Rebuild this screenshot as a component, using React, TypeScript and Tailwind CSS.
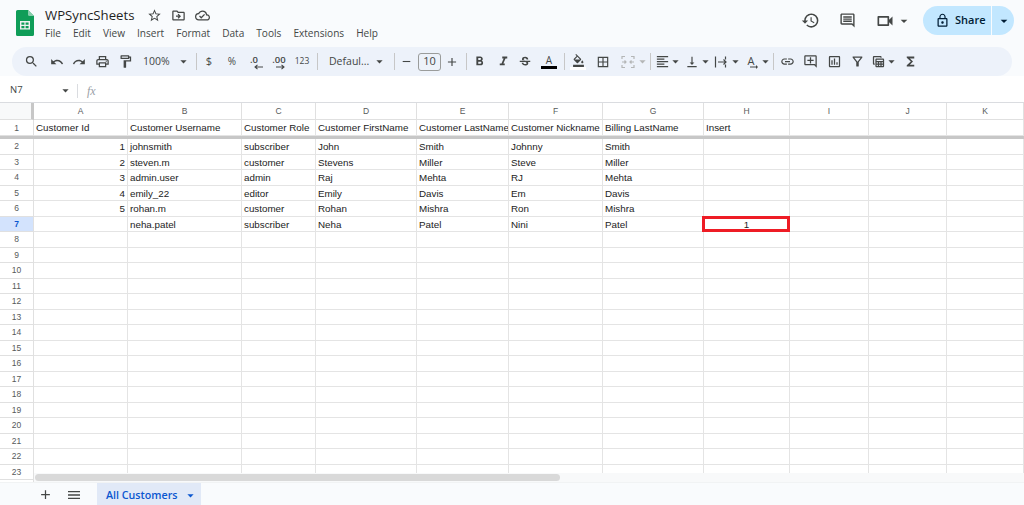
import React from "react";
import {
  MdStarBorder,
  MdOutlineDriveFileMove,
  MdOutlineCloudDone,
  MdHistory,
  MdOutlineComment,
  MdOutlineVideocam,
  MdLockOutline,
  MdArrowDropDown,
  MdSearch,
  MdUndo,
  MdRedo,
  MdOutlinePrint,
  MdOutlineFormatPaint,
  MdRemove,
  MdAdd,
  MdFormatBold,
  MdFormatItalic,
  MdStrikethroughS,
  MdFormatColorFill,
  MdBorderAll,
  MdFormatAlignLeft,
  MdVerticalAlignBottom,
  MdLink,
  MdOutlineAddComment,
  MdOutlineAssessment,
  MdOutlineFilterAlt,
  MdOutlineTableView,
  MdFunctions,
  MdMenu,
  MdArrowRightAlt,
} from "react-icons/md";

const menus = ["File", "Edit", "View", "Insert", "Format", "Data", "Tools", "Extensions", "Help"];

const columns = ["A", "B", "C", "D", "E", "F", "G", "H", "I", "J", "K"];

const titles = [
  "Customer Id",
  "Customer Username",
  "Customer Role",
  "Customer FirstName",
  "Customer LastName",
  "Customer Nickname",
  "Billing LastName",
  "Insert",
];

const customers = [
  ["1", "johnsmith", "subscriber", "John", "Smith", "Johnny", "Smith"],
  ["2", "steven.m", "customer", "Stevens", "Miller", "Steve", "Miller"],
  ["3", "admin.user", "admin", "Raj", "Mehta", "RJ", "Mehta"],
  ["4", "emily_22", "editor", "Emily", "Davis", "Em", "Davis"],
  ["5", "rohan.m", "customer", "Rohan", "Mishra", "Ron", "Mishra"],
  ["", "neha.patel", "subscriber", "Neha", "Patel", "Nini", "Patel"],
];

const Tool = ({ className, children }: { className: string; children: React.ReactNode }) => (
  <span className={"flex h-4 w-4 shrink-0 items-center justify-center text-[#444746] " + className}>
    {children}
  </span>
);

const Arrow = ({ className }: { className: string }) => (
  <span className={"flex h-4 w-2 shrink-0 items-center justify-center text-[#444746] " + className}>
    <MdArrowDropDown size={15} className="shrink-0" />
  </span>
);

const Divider = ({ className }: { className: string }) => (
  <span className={"h-[17px] w-px shrink-0 bg-[#c7c7c7] " + className} />
);

const SheetsLogo = () => (
  <svg width="18" height="26" viewBox="0 0 18 26">
    <path d="M1.6 0H12l6 6v18.4a1.6 1.6 0 0 1-1.6 1.6H1.6A1.6 1.6 0 0 1 0 24.4V1.6A1.6 1.6 0 0 1 1.6 0z" fill="#0f9d58" />
    <path d="M12 0l6 6h-4.4A1.6 1.6 0 0 1 12 4.4z" fill="#87ceac" />
    <path d="M4 11h10v8.5H4zm1.4 1.4v2.3h3v-2.3zm4.2 0v2.3h3v-2.3zm-4.2 3.5v2.3h3v-2.3zm4.2 0v2.3h3v-2.3z" fill="#f1f1f1" fillRule="evenodd" />
  </svg>
);

const MergeIcon = () => (
  <svg width="14" height="14" viewBox="0 0 14 14" fill="none" stroke="#b4b6b6" strokeWidth="1.2">
    <path d="M1 4V1.5h3M10 1.5h3V4M1 10v2.5h3M10 12.5h3V10" />
    <path d="M1 7h3.5M3.5 5.5L5 7 3.5 8.5M13 7H9.5M10.5 5.5L9 7l1.5 1.5" />
  </svg>
);

const WrapIcon = () => (
  <svg width="14" height="14" viewBox="0 0 14 14" fill="none" stroke="#444746" strokeWidth="1.2">
    <path d="M1.5 1.5v11M11.5 1.5v3M11.5 9.5v3M4 7h8M9.5 4.5L12 7 9.5 9.5" />
  </svg>
);

const Decimal = ({ label, right }: { label: string; right?: boolean }) => (
  <span className="relative -mt-[4px] text-[9.5px] font-semibold leading-none">
    {label}
    <svg width="9" height="6" viewBox="0 0 9 6" fill="none" stroke="#444746" strokeWidth="1.1" className="absolute left-[4px] top-[9px]">
      {right ? <path d="M0 3h8M5.5 .8L8 3 5.5 5.2" /> : <path d="M1 3h8M3.5 .8L1 3l2.5 2.2" />}
    </svg>
  </span>
);

const Header = () => (
  <div className="flex h-[47px] shrink-0 items-start">
    <div className="ml-[16px] mt-[10px]">
      <SheetsLogo />
    </div>
    <div className="ml-[11px] flex flex-col">
      <div className="mt-[6px] flex h-[19px] items-center">
        <span className="font-['Open_Sans',sans-serif] text-[13.2px] text-[#1f1f1f]">WPSyncSheets</span>
        <MdStarBorder size={15} className="ml-[13px] text-[#444746]" />
        <MdOutlineDriveFileMove size={15} className="ml-[9px] text-[#444746]" />
        <MdOutlineCloudDone size={15} className="ml-[9px] text-[#444746]" />
      </div>
      <div className="mt-px flex gap-[12px] font-['Open_Sans',sans-serif] text-[10.1px] leading-[14px] text-[#444746]">
        {menus.map((menu) => (
          <span key={menu}>{menu}</span>
        ))}
      </div>
    </div>
    <div className="ml-auto mr-[10px] mt-[6px] flex h-[29px] items-center">
      <MdHistory size={19} className="text-[#444746]" />
      <MdOutlineComment size={17} className="ml-[19px] text-[#444746]" />
      <MdOutlineVideocam size={20} className="ml-[19px] text-[#444746]" />
      <MdArrowDropDown size={16} className="ml-[1px] text-[#444746]" />
      <div className="ml-[11px] flex h-[29px] w-[91px] items-center rounded-full bg-[#c2e7ff] font-['Open_Sans',sans-serif] text-[#001d35]">
        <MdLockOutline size={15} className="ml-[12px]" />
        <span className="ml-[5px] text-[11px] font-semibold">Share</span>
        <span className="ml-[5px] h-full w-px bg-[#f9fbfd]" />
        <MdArrowDropDown size={16} className="ml-[4px]" />
      </div>
    </div>
  </div>
);

const Toolbar = () => (
  <div className="mx-[12px] flex h-[29px] shrink-0 items-center rounded-full bg-[#edf2fa] pl-[11px] font-['Open_Sans',sans-serif] text-[10.5px] text-[#444746]">
    <Tool className="ml-0"><MdSearch size={15} /></Tool>
    <Tool className="ml-[10px]"><MdUndo size={14} /></Tool>
    <Tool className="ml-[6px]"><MdRedo size={14} /></Tool>
    <Tool className="ml-[7px]"><MdOutlinePrint size={15} /></Tool>
    <Tool className="ml-[7px]"><MdOutlineFormatPaint size={15} /></Tool>
    <span className="ml-[10px] w-[28px] shrink-0">100%</span>
    <Arrow className="ml-[8px]" />
    <Divider className="ml-[9px]" />
    <Tool className="ml-[4px] text-[11px]">$</Tool>
    <Tool className="ml-[7px] text-[10px]">%</Tool>
    <Tool className="ml-[6px]"><Decimal label=".0" /></Tool>
    <Tool className="ml-[9px]"><Decimal label=".00" right /></Tool>
    <Tool className="ml-[7px] text-[8.5px]">123</Tool>
    <Divider className="ml-[7px]" />
    <span className="ml-[11px] w-[39px] shrink-0 whitespace-nowrap">Defaul...</span>
    <Arrow className="ml-[7px]" />
    <Divider className="ml-[11px]" />
    <Tool className="ml-[3px]"><MdRemove size={13} /></Tool>
    <span className="ml-[4px] flex h-[18px] w-[23px] shrink-0 items-center justify-center rounded-[3px] border border-[#9a9c9b] text-[11px]">
      10
    </span>
    <Tool className="ml-[3px]"><MdAdd size={14} /></Tool>
    <Divider className="ml-[6px]" />
    <Tool className="ml-[4px]"><MdFormatBold size={15} /></Tool>
    <Tool className="ml-[8px]"><MdFormatItalic size={15} /></Tool>
    <Tool className="ml-[6px]"><MdStrikethroughS size={14} /></Tool>
    <Tool className="ml-[8px]">
      <span className="flex flex-col items-center text-[10px] font-medium leading-[11px]">
        A
        <span className="h-[3px] w-4 bg-black" />
      </span>
    </Tool>
    <Divider className="ml-[7px]" />
    <Tool className="ml-[5px]">
      <span className="flex flex-col items-center">
        <MdFormatColorFill size={13} />
        <span className="h-[3px] w-4 bg-white" />
      </span>
    </Tool>
    <Tool className="ml-[9px]"><MdBorderAll size={14} /></Tool>
    <Tool className="ml-[9px]"><MergeIcon /></Tool>
    <span className="ml-[2px] flex h-4 w-2 shrink-0 items-center justify-center text-[#b4b6b6]">
      <MdArrowDropDown size={15} className="shrink-0" />
    </span>
    <Divider className="ml-[4px]" />
    <Tool className="ml-[3px]"><MdFormatAlignLeft size={15} /></Tool>
    <Arrow className="ml-px" />
    <Tool className="ml-[5px]"><MdVerticalAlignBottom size={14} /></Tool>
    <Arrow className="ml-px" />
    <Tool className="ml-[4px]"><WrapIcon /></Tool>
    <Arrow className="ml-[2px]" />
    <Tool className="ml-[4px]">
      <span className="relative -mt-[3px] text-[11px] leading-none">
        A
        <MdArrowRightAlt size={12} className="absolute -bottom-[7px] left-0" />
      </span>
    </Tool>
    <Arrow className="ml-[2px]" />
    <Divider className="ml-[4px]" />
    <Tool className="ml-[5px]"><MdLink size={15} /></Tool>
    <Tool className="ml-[7px]"><MdOutlineAddComment size={15} /></Tool>
    <Tool className="ml-[8px]"><MdOutlineAssessment size={15} /></Tool>
    <Tool className="ml-[7px]"><MdOutlineFilterAlt size={15} /></Tool>
    <Tool className="ml-[5px]"><MdOutlineTableView size={15} /></Tool>
    <Arrow className="ml-px" />
    <Tool className="ml-[7px]"><MdFunctions size={15} /></Tool>
  </div>
);

const FormulaBar = () => (
  <div className="flex h-[27px] shrink-0 items-center border-b border-[#dadce0] bg-white pl-[10px] pt-[3px] text-[#444746]">
    <span className="w-[48px] font-['Open_Sans',sans-serif] text-[9.5px]">N7</span>
    <MdArrowDropDown size={15} />
    <span className="ml-[4px] h-[14px] w-px bg-[#dadce0]" />
    <span className="ml-[9px] font-['Liberation_Serif',serif] text-[12px] italic text-[#9aa0a6]">fx</span>
  </div>
);

const cellBase =
  "whitespace-nowrap border-b border-r border-[#e4e4e4] font-['Liberation_Sans',sans-serif] text-[9.8px] leading-[16px] text-[#222222]";

const Sheet = () => {
  const rows = Array.from({ length: 22 }, (_, i) => i + 2);

  return (
    <div className="relative min-h-0 flex-1 overflow-hidden bg-white">
      <div className="grid grid-cols-[34px_94px_114px_74px_101px_92px_94px_101px_86px_79px_78px_77px] grid-rows-[17px_16px_3px] auto-rows-[15.5px]">
        <div className="border-b border-r-[3px] border-[#c7c7c7] border-b-[#e0e0e0] bg-[#f8f9fa]" />
        {columns.map((col) => (
          <div
            key={col}
            className="flex items-center justify-center border-b border-r border-[#e0e0e0] font-['Liberation_Sans',sans-serif] text-[8.5px] text-[#575a5a]"
          >
            {col}
          </div>
        ))}

        <div className="flex items-center justify-center border-b border-r border-[#e0e0e0] pt-px font-['Liberation_Sans',sans-serif] text-[8.5px] text-[#575a5a]">
          1
        </div>
        {columns.map((col, i) => (
          <div key={col} className={cellBase + " overflow-hidden pl-[2px]"}>
            {titles[i]}
          </div>
        ))}

        <div className="col-span-12 bg-[#c7c7c7]" />

        {rows.map((row) => {
          const record = customers[row - 2];
          const selected = row === 7;
          return (
            <React.Fragment key={row}>
              <div
                className={
                  selected
                    ? "flex items-center justify-center border-b border-r border-[#e0e0e0] bg-[#d3e3fd] pt-px font-['Liberation_Sans',sans-serif] text-[8.5px] font-bold text-[#0b57d0]"
                    : "flex items-center justify-center border-b border-r border-[#e0e0e0] pt-px font-['Liberation_Sans',sans-serif] text-[8.5px] text-[#575a5a]"
                }
              >
                {row}
              </div>
              {columns.map((col, i) => {
                const value = record ? record[i] : undefined;
                if (selected && col === "H") {
                  return (
                    <div key={col} className={cellBase + " relative text-center"}>
                      1
                      <span className="absolute -bottom-px -left-[2px] -right-px -top-px z-10 border-[3px] border-[#ee1c25]" />
                    </div>
                  );
                }
                return (
                  <div
                    key={col}
                    className={i === 0 ? cellBase + " overflow-hidden pr-[2px] text-right" : cellBase + " overflow-hidden pl-[2px]"}
                  >
                    {value}
                  </div>
                );
              })}
            </React.Fragment>
          );
        })}
      </div>
      <div className="absolute bottom-0 left-[33px] right-0 z-20 flex h-[9px] items-center border-l border-[#e0e0e0] bg-[#f8f9fa]">
        <span className="ml-px h-[7px] w-[525px] rounded-full bg-[#d9d9d9]" />
      </div>
    </div>
  );
};

const SheetTabs = () => (
  <div className="flex h-[23px] shrink-0 items-center border-t border-[#f1f3f4] bg-[#f9fbfd] text-[#444746]">
    <MdAdd size={15} className="ml-[38px] mt-px" />
    <MdMenu size={16} className="ml-[13px] mt-px" />
    <div className="ml-[15px] flex h-full w-[104px] items-center bg-[#e1e9f7] pl-[9px] pt-[2px] font-['Open_Sans',sans-serif] text-[10.7px] font-semibold text-[#0b57d0]">
      All Customers
      <MdArrowDropDown size={15} className="ml-[5px]" />
    </div>
  </div>
);

const App = () => {
  return (
    <div className="flex h-[505px] w-[1024px] flex-col overflow-hidden bg-[#f9fbfd]">
      <Header />
      <Toolbar />
      <FormulaBar />
      <Sheet />
      <SheetTabs />
    </div>
  );
};

export default App;
